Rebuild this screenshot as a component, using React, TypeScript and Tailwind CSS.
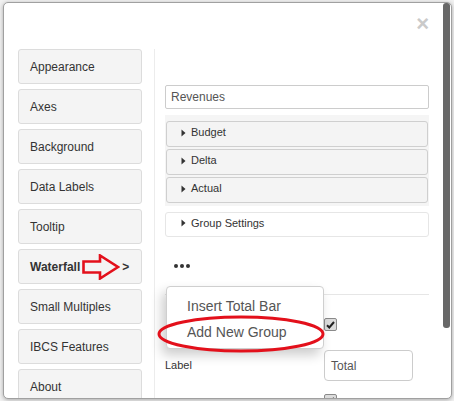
import React from "react";

const menu = [
  "Appearance",
  "Axes",
  "Background",
  "Data Labels",
  "Tooltip",
  "Waterfall",
  "Small Multiples",
  "IBCS Features",
  "About",
];

function Caret() {
  return (
    <svg width="5" height="8" viewBox="0 0 5 8" className="mr-[5px] shrink-0">
      <path d="M0.5 0.5 L4.5 4 L0.5 7.5 Z" fill="#333" />
    </svg>
  );
}

function Check() {
  return (
    <div className="w-[13px] h-[13px] rounded-[2px] border border-[#8a8a8a] bg-[#dcdcdc] flex items-center justify-center">
      <svg width="9" height="8" viewBox="0 0 9 8">
        <path d="M1 4.2 L3.3 6.5 L8 1" stroke="#222" strokeWidth="2" fill="none" />
      </svg>
    </div>
  );
}

export default function App() {
  return (
    <div
      className="relative w-[454px] h-[401px] overflow-hidden bg-[#f1f1f1] pl-[3px] pt-[2px]"
      style={{ fontFamily: '"Liberation Sans", Arial, sans-serif' }}
    >
      <div className="flex w-[449px] h-[397px] rounded-[5px] border border-[#a0a0a0] bg-white overflow-hidden shadow-[0_1px_4px_rgba(0,0,0,0.3)]">
        <div className="w-[438px] shrink-0">
          <div className="h-[46px] flex justify-end items-start pr-[13px] pt-[10px]">
            <span className="text-[22px] leading-[22px] font-bold text-[#cacaca]">×</span>
          </div>

          <div className="flex h-[350px]">
            {/* left nav */}
            <div className="pl-[14px] w-[138px] flex flex-col gap-[5px] shrink-0">
              {menu.map((m) => (
                <div
                  key={m}
                  className="h-[35px] shrink-0 rounded-[3px] border border-[#dcdcdc] bg-[#f4f4f4] flex items-center px-[11px] text-[12px] text-[#333]"
                >
                  {m === "Waterfall" ? (
                    <>
                      <span className="font-bold">Waterfall</span>
                      <svg width="38" height="26" viewBox="0 0 38 26" className="shrink-0 ml-[2px]">
                        <path
                          d="M1.5 7.5 L18 7.5 L18 1.5 L36 13 L18 24.5 L18 18.5 L1.5 18.5 Z"
                          stroke="#e3101b"
                          strokeWidth="2.6"
                          fill="none"
                          strokeLinejoin="miter"
                        />
                      </svg>
                      <span className="ml-[2px] font-bold">&gt;</span>
                    </>
                  ) : (
                    m
                  )}
                </div>
              ))}
            </div>

            {/* right panel */}
            <div className="ml-[12px] border-l border-[#ececec] pl-[10px] w-[275px] pt-[36px]">
              <div className="w-[264px] h-[24px] rounded-[2px] border border-[#cccccc] flex items-center px-[5px] text-[12px] text-[#555]">
                Revenues
              </div>

              <div className="mt-[6px] w-[264px] bg-[#f5f5f5] pt-[6px] pb-[3px] px-[1px] flex flex-col gap-[2px]">
                {["Budget", "Delta", "Actual"].map((g) => (
                  <div
                    key={g}
                    className="h-[26px] rounded-[3px] border border-[#cfcfcf] bg-[#f4f4f4] flex items-center pl-[14px] pb-[3px] text-[11px] text-[#333]"
                  >
                    <Caret />
                    {g}
                  </div>
                ))}
              </div>

              <div className="mt-[6px] w-[264px] h-[25px] rounded-[3px] border border-[#e6e6e6] bg-white flex items-center pl-[15px] pb-[3px] text-[11px] text-[#333]">
                <Caret />
                Group Settings
              </div>

              <div className="h-[57px] flex items-start pt-[27px] pl-[9px] gap-[2px]">
                <span className="w-[4px] h-[4px] rounded-full bg-[#333]" />
                <span className="w-[4px] h-[4px] rounded-full bg-[#333]" />
                <span className="w-[4px] h-[4px] rounded-full bg-[#333]" />
              </div>

              <div className="relative w-[264px] border-t border-[#e6e6e6]">
                <div className="grid grid-cols-[159px_105px] text-[11px] text-[#333]">
                  <div className="h-[13px] mt-[23px]" />
                  <div className="mt-[23px]">
                    <Check />
                  </div>
                  <div className="mt-[19px] h-[31px] flex items-center">Label</div>
                  <div className="mt-[19px] w-[89px] h-[31px] rounded-[4px] border border-[#cccccc] flex items-center px-[6px] text-[12px] text-[#555]">
                    Total
                  </div>
                  <div className="mt-[13px]" />
                  <div className="mt-[13px]">
                    <Check />
                  </div>
                </div>

                {/* popup menu */}
                <div className="absolute left-[1px] top-[-9px] w-[158px] h-[63px] rounded-[4px] border border-[#cfcfcf] bg-white shadow-[-4px_6px_12px_rgba(0,0,0,0.2)] pt-[6px] pl-[20px] text-[14px] text-[#555]">
                  <div className="h-[26px] flex items-center">Insert Total Bar</div>
                  <div className="h-[26px] flex items-center">Add New Group</div>
                </div>

                <svg
                  width="170"
                  height="38"
                  viewBox="0 0 170 38"
                  className="absolute left-[-8px] top-[20px]"
                >
                  <ellipse cx="84" cy="19" rx="82" ry="17" stroke="#e3101b" strokeWidth="3" fill="none" />
                </svg>
              </div>
            </div>
          </div>
        </div>
        <div className="w-[9px] shrink-0" />
      </div>

      {/* scrollbar thumb of the dialog */}
      <div className="absolute z-50 left-[443px] top-[3px] w-[7px] h-[325px] rounded-[3px] bg-[#686868]" />
    </div>
  );
}
